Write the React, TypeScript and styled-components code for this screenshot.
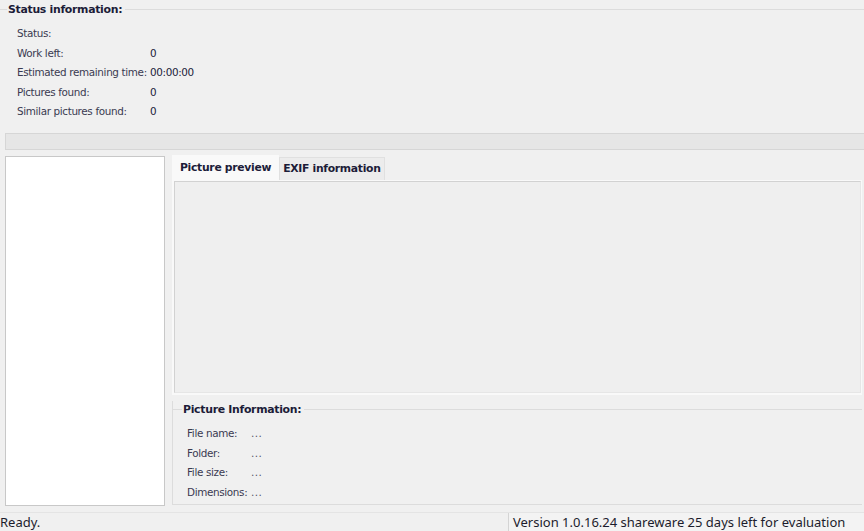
import React from "react";
import styled, { createGlobalStyle } from "styled-components";

const Global = createGlobalStyle`
  html, body { margin: 0; padding: 0; background: #f0f0f0; }
  body { font-family: "DejaVu Sans", "Liberation Sans", sans-serif; }
`;

const Window = styled.div`
  width: 864px;
  height: 531px;
  background: #f0f0f0;
  display: flex;
  flex-direction: column;
  overflow: hidden;
  color: #33334a;
  font-size: 10px;
`;

const GroupTitleRow = styled.div<{ $indent: number }>`
  display: flex;
  align-items: center;
  height: 18px;
  &::before {
    content: "";
    width: ${(p) => p.$indent}px;
    height: 1px;
    background: #dcdcdc;
    flex: none;
  }
  &::after {
    content: "";
    flex: 1;
    height: 1px;
    background: #dcdcdc;
    margin-left: 3px;
  }
`;

const GroupTitle = styled.span`
  font-family: "DejaVu Sans", sans-serif;
  font-weight: bold;
  font-size: 10.9px;
  letter-spacing: -0.3px;
  color: #1c1c38;
  padding-left: 1px;
`;

const StatusGroup = styled.section`
  display: flex;
  flex-direction: column;
`;

const StatusRows = styled.div`
  display: flex;
  flex-direction: column;
  padding: 5.5px 0 0 17px;
`;

const InfoRow = styled.div<{ $labelWidth: number }>`
  display: grid;
  grid-template-columns: ${(p) => p.$labelWidth}px 1fr;
  height: 19.5px;
  align-items: center;
  font-size: 10.4px;
  letter-spacing: -0.35px;
  white-space: nowrap;
`;

const Label = styled.span`
  color: #3a3a50;
`;

const Value = styled.span`
  color: #22223a;
`;

const ProgressBar = styled.div`
  margin: 11.5px 0 0 5px;
  height: 15px;
  background: #e6e6e6;
  border: 1px solid #d6d6d6;
  border-right: none;
`;

const Main = styled.div`
  display: flex;
  margin-top: 6px;
  height: 350px;
  padding-left: 5px;
  gap: 7px;
`;

const FileList = styled.div`
  width: 158px;
  background: #ffffff;
  border: 1px solid #c8c8c8;
`;

const RightPane = styled.div`
  flex: 1;
  display: flex;
  flex-direction: column;
  padding-right: 2px;
`;

const TabStrip = styled.div`
  display: flex;
  align-items: flex-end;
  height: 24px;
`;

const Tab = styled.div<{ $active?: boolean }>`
  height: ${(p) => (p.$active ? 24 : 22)}px;
  padding: 0 ${(p) => (p.$active ? 7 : 3)}px;
  display: flex;
  align-items: center;
  font-family: "DejaVu Sans", sans-serif;
  font-weight: bold;
  font-size: 10.8px;
  letter-spacing: -0.3px;
  color: #1c1c38;
  background: ${(p) => (p.$active ? "#f9f9f9" : "#ececec")};
  border: 1px solid ${(p) => (p.$active ? "#f9f9f9" : "#e0e0e0")};
  border-bottom: none;
`;

const TabPanel = styled.div`
  height: 212px;
  background: #f9f9f9;
  padding: 1px 1px 2px 2px;
  display: flex;
`;

const PreviewArea = styled.div`
  flex: 1;
  background: #efefef;
  border: 1px solid #d2d2d2;
  border-right-color: #e6e6e6;
  border-bottom-color: #e6e6e6;
`;

const PictureGroup = styled.section`
  margin-top: 6px;
  height: 103px;
  display: flex;
  flex-direction: column;
  border-left: 1px solid #dcdcdc;
  border-bottom: 1px solid #dcdcdc;
`;

const PictureRows = styled.div`
  display: flex;
  flex-direction: column;
  padding: 5px 0 0 14px;
`;

const Dots = styled.span`
  color: #55556a;
  letter-spacing: 0.5px;
`;

const StatusBar = styled.div`
  margin-top: 6px;
  flex: 1;
  display: flex;
  border-top: 1px solid #e4e4e4;
  font-family: "Noto Sans", "Open Sans", sans-serif;
  font-size: 13px;
  color: #1c1c2c;
`;

const StatusCell = styled.div<{ $width?: number }>`
  ${(p) => (p.$width ? `width: ${p.$width}px; flex: none;` : "flex: 1;")}
  display: flex;
  align-items: center;
  padding-left: 0;
  white-space: nowrap;
`;

const VersionCell = styled(StatusCell)`
  border-left: 1px solid #d4d4d4;
  padding-left: 4px;
  background: #f3f3f3;
`;

const statusRows: [string, string][] = [
  ["Status:", ""],
  ["Work left:", "0"],
  ["Estimated remaining time:", "00:00:00"],
  ["Pictures found:", "0"],
  ["Similar pictures found:", "0"],
];

const pictureRows = ["File name:", "Folder:", "File size:", "Dimensions:"];

export default function App() {
  return (
    <>
      <Global />
      <Window>
        <StatusGroup>
          <GroupTitleRow $indent={7}>
            <GroupTitle>Status information:</GroupTitle>
          </GroupTitleRow>
          <StatusRows>
            {statusRows.map(([l, v]) => (
              <InfoRow key={l} $labelWidth={133}>
                <Label>{l}</Label>
                <Value>{v}</Value>
              </InfoRow>
            ))}
          </StatusRows>
        </StatusGroup>
        <ProgressBar />
        <Main>
          <FileList />
          <RightPane>
            <TabStrip>
              <Tab $active>Picture preview</Tab>
              <Tab>EXIF information</Tab>
            </TabStrip>
            <TabPanel>
              <PreviewArea />
            </TabPanel>
            <PictureGroup>
              <GroupTitleRow $indent={9}>
                <GroupTitle>Picture Information:</GroupTitle>
              </GroupTitleRow>
              <PictureRows>
                {pictureRows.map((l) => (
                  <InfoRow key={l} $labelWidth={64}>
                    <Label>{l}</Label>
                    <Dots>...</Dots>
                  </InfoRow>
                ))}
              </PictureRows>
            </PictureGroup>
          </RightPane>
        </Main>
        <StatusBar>
          <StatusCell $width={508}>Ready.</StatusCell>
          <VersionCell>Version 1.0.16.24 shareware 25 days left for evaluation</VersionCell>
        </StatusBar>
      </Window>
    </>
  );
}
